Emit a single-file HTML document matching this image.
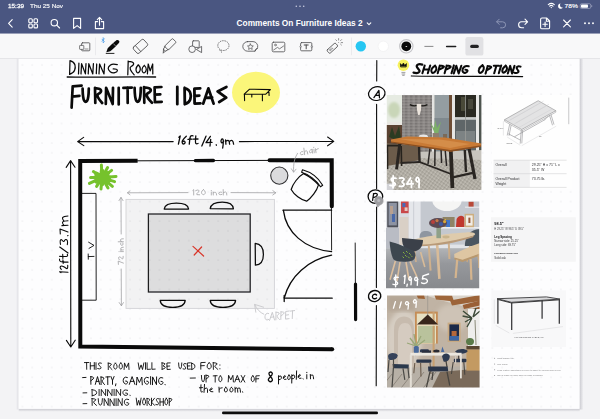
<!DOCTYPE html>
<html>
<head>
<meta charset="utf-8">
<title>Comments On Furniture Ideas 2</title>
<style>
html,body{margin:0;padding:0;background:#f3f3f5;overflow:hidden;}
body{width:600px;height:419px;font-family:"Liberation Sans",sans-serif;}
svg{display:block;position:absolute;left:0;top:0;}
text{font-family:"Liberation Sans",sans-serif;}
.hw{fill:none;stroke:#0a0a0a;stroke-linecap:round;stroke-linejoin:round;}
.ui{fill:none;stroke:#fff;stroke-width:1.1;stroke-linecap:round;stroke-linejoin:round;}
.tb{fill:none;stroke:#4a4a4c;stroke-width:0.8;stroke-linecap:round;stroke-linejoin:round;}
</style>
</head>
<body>
<svg width="600" height="419" viewBox="0 0 600 419">
<defs>
  <pattern id="dots" x="17.5" y="60" width="9.79" height="9.76" patternUnits="userSpaceOnUse">
    <circle cx="4.9" cy="4.9" r="0.58" fill="#d9d9dd"/>
  </pattern>
  <linearGradient id="shR" x1="0" x2="1" y1="0" y2="0">
    <stop offset="0" stop-color="#c9c9cf"/><stop offset="1" stop-color="#f3f3f5"/>
  </linearGradient>
  <linearGradient id="shB" x1="0" x2="0" y1="0" y2="1">
    <stop offset="0" stop-color="#c9c9cf"/><stop offset="1" stop-color="#f3f3f5"/>
  </linearGradient>
  <filter id="b1" x="-10%" y="-10%" width="120%" height="120%"><feGaussianBlur stdDeviation="0.6"/></filter>
  <filter id="b2" x="-10%" y="-10%" width="120%" height="120%"><feGaussianBlur stdDeviation="1.2"/></filter>
  <filter id="b3" x="-10%" y="-10%" width="120%" height="120%"><feGaussianBlur stdDeviation="2.2"/></filter>
  <filter id="b03" x="-10%" y="-10%" width="120%" height="120%"><feGaussianBlur stdDeviation="0.35"/></filter>
</defs>

<!-- app background -->
<rect x="0" y="0" width="600" height="419" fill="#f3f3f5"/>

<!-- page -->
<g id="page">
  <rect x="579.5" y="58.5" width="4" height="351" fill="url(#shR)"/>
  <rect x="18.7" y="408.8" width="561" height="3" fill="url(#shB)"/>
  <rect x="16.7" y="58.5" width="2" height="351" fill="#e6e6ea"/>
  <rect x="18.7" y="58.5" width="560.8" height="350.3" fill="#fdfdfe"/>
  <rect x="18.7" y="58.5" width="560.8" height="350.3" fill="url(#dots)"/>
</g>

<!-- PHOTOS -->
<g id="photos">
<defs>
<clipPath id="cA"><rect x="386.8" y="95" width="94.6" height="95"/></clipPath>
<clipPath id="cB"><rect x="386" y="201.6" width="93.2" height="86.6"/></clipPath>
<clipPath id="cC"><rect x="387" y="295.6" width="92.6" height="92"/></clipPath>
<pattern id="rugA" width="3" height="3" patternUnits="userSpaceOnUse" patternTransform="rotate(35)"><rect width="3" height="3" fill="#b1ada4"/><rect width="1.5" height="1.5" fill="#9d9990"/><rect x="1.5" y="1.5" width="1.5" height="1.5" fill="#c4c0b7"/></pattern>
<pattern id="brick" width="5" height="3" patternUnits="userSpaceOnUse"><rect width="5" height="3" fill="#8b8785"/><rect width="2.4" height="1.4" fill="#7a7674"/><rect x="2.6" y="1.6" width="2.2" height="1.2" fill="#9a9694"/></pattern>
</defs>
<g clip-path="url(#cA)"><g filter="url(#b1)">
<rect x="384" y="92" width="100" height="101" fill="#b9b6b0"/>
<rect x="385" y="93" width="17" height="31" fill="#e6ebe2"/>
<ellipse cx="394" cy="110" rx="6" ry="8" fill="#c9d6b8" filter="url(#b2)"/>
<rect x="385" y="122" width="17" height="3" fill="#e9e7e2"/>
<rect x="385" y="125" width="18" height="38" fill="#5a4330"/>
<path d="M389,137 L392,127 L395,136 L399,126 L401,138 L396,140 Z" fill="#2c3b22"/>
<rect x="402" y="93" width="30.4" height="60" fill="url(#brick)"/>
<rect x="432" y="93" width="2.6" height="60" fill="#e4e4e2"/>
<rect x="434.6" y="93" width="14.6" height="62" fill="#949da1"/>
<rect x="434.6" y="118" width="14.6" height="36" fill="#7f898e"/>
<rect x="449" y="93" width="3.2" height="60" fill="#6d4e34"/>
<rect x="452" y="93" width="3.2" height="64" fill="#e6e6e4"/>
<rect x="455" y="93" width="21" height="24.4" fill="#2b2a22"/>
<rect x="461" y="97" width="4" height="14" fill="#4a4838"/><rect x="468" y="99" width="5" height="10" fill="#47463a"/>
<rect x="455" y="117.2" width="21" height="2.6" fill="#c9cccb"/>
<rect x="455" y="119.8" width="21" height="36" fill="#5e6668"/>
<rect x="456" y="131" width="19" height="12" fill="#7d8384"/>
<rect x="465.2" y="93" width="0.8" height="60" fill="#9a9c98"/>
<rect x="476" y="93" width="3" height="70" fill="#e9e9e7"/>
<rect x="479" y="93" width="3" height="70" fill="#4e5250"/>
<path d="M384,153 L484,150 L484,193 L384,193 Z" fill="#c7c4be"/>
<path d="M384,165 L420,158 L484,160 L484,193 L384,193 Z" fill="url(#rugA)"/>
<path d="M384,184 L396,183 L392,193 L384,193 Z" fill="#d2d2d6"/>
<path d="M387,143 L420,146 L420,160 L387,166 Z" fill="#6c5c4c"/>
<path d="M409.8,104.6 C413,106.4 415,106 417,105.4 M427.4,104.6 C424,106.4 422,106 420.6,105.4" stroke="#1c1a18" stroke-width="1.3" fill="none"/>
<path d="M416.6,104 L421.4,104 L421,110 L419.6,115 L418.2,115 L417,110 Z" fill="#ebe4dc"/>
<path d="M435,134 L430,122 L434,128 L435.4,120 L437,128 L441,121.6 L438,134 Z" fill="#7cb167"/>
<rect x="432.6" y="133" width="6.4" height="6.6" fill="#8c7f72"/>
<ellipse cx="423.4" cy="136.8" rx="4.6" ry="2.2" fill="#e6e6e6"/>
<rect x="443" y="134" width="4" height="4" fill="#7a6a58"/>
<path d="M430,148 L428,164 M435,148 L434.8,166 M441,148 L441.6,163 M445,148 L446.6,166" stroke="#2a2725" stroke-width="1.5" fill="none"/>
<path d="M387.4,145 L387.6,169 M387,145.6 L401,145.6 M401.2,146 L401.6,166" stroke="#25231f" stroke-width="1.6" fill="none"/>
<path d="M400,142 L396.6,169.4" stroke="#2a2624" stroke-width="3" fill="none"/>
<path d="M419,145 L419.6,163" stroke="#2a2624" stroke-width="2.4" fill="none"/>
<path d="M400.6,163 L419.4,162 L451,174" stroke="#2a2624" stroke-width="1.8" fill="none"/>
<path d="M450.8,150 L452.4,188" stroke="#2a2624" stroke-width="3.8" fill="none"/>
<path d="M469,148 L475,179" stroke="#2a2624" stroke-width="3.2" fill="none"/>
<path d="M464.8,150 L466,172" stroke="#2a2624" stroke-width="2.4" fill="none"/>
<path d="M452.6,177.4 L474,172.6" stroke="#2a2624" stroke-width="2.2" fill="none"/>
<path d="M391,139.4 L407,136.6 L445,137.4 L481.4,143.6 L481.4,146.6 L450.6,151.6 L391,142.2 Z" fill="#c87a36"/>
<path d="M400,139 L440,139.4 L470,144 L450,148 Z" fill="#d48d4a"/>
<path d="M391,141.4 L450.6,150 L481.4,145.2 L481.4,146.8 L450.6,151.8 L391,142.6 Z" fill="#8a4f22"/>
</g>
<path d="M396.0,178.4 Q393.0,177.5 391.8,178.4 Q390.6,179.4 391.8,180.6 Q393.0,181.8 394.5,183.0 Q396.0,184.1 394.8,185.2 Q393.6,186.2 390.0,185.3  M393.2,176.0 L393.0,187.8 M399.6,178.2 Q402.8,177.4 403.6,178.4 Q404.5,179.3 402.9,180.7 Q401.4,182.0 403.0,183.1 Q404.6,184.1 403.7,185.6 Q402.8,187.0 399.4,186.2  M410.6,178.0 L406.8,184.1 L413.2,183.8 M411.4,180.8 L411.5,187.4 M419.4,179.9 Q417.6,182.7 416.5,181.3 Q415.5,179.9 416.4,178.2 Q417.3,176.6 418.4,178.0 Q419.4,179.3 419.0,187.6 " fill="none" stroke="#ffffff" stroke-width="1.8" stroke-linecap="round" stroke-linejoin="round" />
</g>
<g clip-path="url(#cB)"><g filter="url(#b1)">
<rect x="383" y="198" width="100" height="93" fill="#c4c8cf"/>
<linearGradient id="flB" x1="0" x2="0" y1="0" y2="1"><stop offset="0" stop-color="#b2b4b7"/><stop offset="0.35" stop-color="#96989c"/><stop offset="1" stop-color="#85878b"/></linearGradient>
<rect x="383" y="248" width="100" height="44" fill="url(#flB)"/>
<rect x="383" y="244.6" width="100" height="3.6" fill="#e2e4e8"/>
<rect x="383" y="198" width="26" height="50" fill="#d9dbe0"/>
<rect x="387.2" y="201" width="11" height="26.4" fill="#4d4f58"/>
<rect x="388.6" y="203" width="8.2" height="22.4" fill="#8d93a2"/>
<rect x="390" y="206" width="3" height="8" fill="#b8a090"/><rect x="392" y="214" width="3" height="8" fill="#4a68a8"/>
<rect x="401" y="201" width="7.6" height="12.2" fill="#c9474a"/>
<rect x="402.4" y="203" width="3" height="4" fill="#4a6ab8"/><rect x="404.6" y="207.4" width="3" height="3.6" fill="#e4c8c0"/>
<rect x="399.4" y="217" width="9" height="28" fill="#d9d0c6"/>
<rect x="383" y="228" width="16" height="20" fill="#b9bcc4"/>
<rect x="409" y="198" width="11.6" height="48" fill="#e5e7eb"/>
<rect x="413" y="198" width="1.2" height="48" fill="#cfd2d8"/>
<ellipse cx="447" cy="200.4" rx="14.6" ry="10.6" fill="#f5f5f4"/>
<rect x="441" y="227" width="40" height="1.6" fill="#eceef0"/>
<rect x="442.6" y="217" width="12" height="10" fill="#8f8466"/>
<rect x="446" y="220" width="4" height="7" fill="#3f74c8"/><rect x="443" y="219" width="3" height="4" fill="#d8b040"/>
<path d="M456,227 L456.6,219 C459,214.6 463,215 464.4,218 L464.4,227 Z" fill="#c0382e"/>
<rect x="464.6" y="213.8" width="9.4" height="13.4" fill="#cdae80"/>
<rect x="466" y="215.4" width="6.6" height="10.2" fill="#f1ede6"/>
<rect x="468.4" y="217.6" width="2" height="5.4" fill="#9a5a3a"/>
<rect x="465" y="206.6" width="15" height="1.2" fill="#e8e8ea"/><rect x="468.6" y="201.6" width="5" height="5" fill="#b84838"/>
<path d="M419.6,238 C419,232 423,230.6 427,231 C431,231.4 433,234 432.6,238 Z" fill="#8f96a0"/>
<path d="M464.8,246 C465,236 470,229.6 479.6,229 L479.6,246 Z" fill="#4b5661"/>
<path d="M470,246 L467,262 M476,246 L479,262" stroke="#c9a882" stroke-width="1.4" fill="none"/>
<path d="M437.2,245 L439.4,278.8" stroke="#d8bb98" stroke-width="2.6" fill="none"/>
<path d="M428.8,246 L430.6,270.6" stroke="#cfb08c" stroke-width="2" fill="none"/>
<path d="M448.8,243 L449.4,259" stroke="#cfb08c" stroke-width="2" fill="none"/>
<path d="M414,246 L416,262" stroke="#cfb08c" stroke-width="1.6" fill="none"/>
<path d="M408,241.4 C418,237 440,234 466,232.4 C474,232 477,233.6 474,235.4 C462,240 440,244.6 424,245.6 C414,246 407,244 408,241.4 Z" fill="#dfcbac"/>
<path d="M409,243.6 C416,246 440,244.6 474,235.4 L473,237.2 C450,245 420,248 409,245 Z" fill="#b99a78"/>
<rect x="436.4" y="226.6" width="4.6" height="11.6" fill="#8fa088"/>
<ellipse cx="438" cy="223" rx="9" ry="5" fill="#5b4a52"/>
<circle cx="433" cy="222" r="2" fill="#b8403a"/><circle cx="441" cy="224" r="2" fill="#3a5aa8"/><circle cx="437" cy="220.6" r="1.6" fill="#c8784a"/><circle cx="444.6" cy="221.6" r="1.6" fill="#d8a838"/>
<ellipse cx="446" cy="237" rx="3.6" ry="1.4" fill="#c9b48c"/>
<path d="M402,238 L423,240 C423,247 419,251.6 412,251.6 C406,251.6 402,247 402,238 Z" fill="#3b4149"/>
<path d="M420.6,252 L424.8,267" stroke="#d8bb98" stroke-width="1.6" fill="none"/>
<path d="M389.6,241.6 C396,243 406,247 413,250.6 C416.6,253 416,258 412.6,260.6 C406,262.6 397,262 393.6,259.6 C391,255 390,248 389.6,241.6 Z" fill="#3d4650"/>
<path d="M403,252 l1.6,1.6 M406,251 l1.6,1.6 M409,253 l1.6,1.6 M405,255 l1.6,1.6 M408,256.6 l1.6,1.6 M411,255.6 l1.2,1.2 M402.6,256.6 l1.4,1.4" stroke="#8fc03a" stroke-width="0.9" fill="none"/>
<path d="M395.4,261 L390,279.8 M400,262 L397,281 M410,261.6 L417,277 M406,262 L409,280" stroke="#dcbf9e" stroke-width="1.6" fill="none"/>
<path d="M454.2,254 C462,250 472,245.6 480,243 L480,254 L462.6,260.4 L454.4,258 Z" fill="#dec6a2"/>
<path d="M454.4,257.4 L462.6,259.8 L480,253.4 L480,255.6 L462.6,262 L454.4,259.4 Z" fill="#b8986e"/>
<path d="M457.2,259.6 L455.6,278" stroke="#d4b48e" stroke-width="2.2" fill="none"/>
<path d="M470.6,259 L471.4,279.8" stroke="#d4b48e" stroke-width="2.2" fill="none"/>
<path d="M478.6,254 L479,268" stroke="#c9aa84" stroke-width="1.6" fill="none"/>
</g>
<path d="M398.2,277.4 Q395.6,276.5 394.6,277.4 Q393.5,278.4 394.6,279.6 Q395.6,280.8 396.9,282.0 Q398.2,283.1 397.2,284.2 Q396.1,285.2 393.0,284.3  M395.8,275.0 L395.6,286.8 M404.1,276.4 L405.2,275.2 L404.4,283.4 M407.3,284.2 L406.9,286.2 M411.6,278.8 Q410.0,280.9 409.3,279.9 Q408.5,278.8 409.3,277.5 Q410.1,276.2 410.8,277.3 Q411.6,278.4 411.0,284.8  M417.9,279.2 Q416.1,281.3 415.1,280.3 Q414.2,279.2 415.1,277.9 Q416.0,276.6 417.0,277.7 Q417.9,278.8 417.3,285.2 " fill="none" stroke="#ffffff" stroke-width="1.4" stroke-linecap="round" stroke-linejoin="round" />
<path d="M428.6,274 L423,275.8 L422.4,279 C425,278 428,279.4 427.4,281.6 C426.6,283.6 423.6,284 421.6,282.8" fill="none" stroke="#ffffff" stroke-width="1.4" stroke-linecap="round" stroke-linejoin="round" />
</g>
<g clip-path="url(#cC)"><g filter="url(#b1)">
<rect x="384" y="292" width="100" height="100" fill="#c0b3a4"/>
<ellipse cx="404" cy="340" rx="18" ry="30" fill="#d6cdc2" filter="url(#b3)"/>
<ellipse cx="452" cy="318" rx="16" ry="14" fill="#cec3b6" filter="url(#b3)"/>
<rect x="387" y="295" width="28" height="16" fill="#b3a595" filter="url(#b3)"/>
<path d="M415,292 L484,292 L484,312 L462,306 L440,300 Z" fill="#d9d3cb"/>
<path d="M416.6,295 L424,295 L425,299 L418,298.6 Z" fill="#9c6438"/>
<path d="M434.4,295 L452,295.4 L454,301.4 L436,299.4 Z" fill="#9e663a"/>
<path d="M450,300.6 L480,295 L480,301 L452,305.6 Z" fill="#9c6438"/>
<path d="M462.6,305 L480,300.6 L480,305.6 L464,309 Z" fill="#9a5e34"/>
<path d="M472,309 L480,306.6 L480,310 L473,311.6 Z" fill="#9a5e34"/>
<path d="M394,370 L394,330 C394,320 399,316.6 404,316.6 C409,316.6 414,320 414,330 L414,370 Z" fill="#c7bbae"/>
<path d="M398,370 L398,334 C398,326 401,323 405,323 C409,323 412,326 412,334 L412,370 Z" fill="#d5cbc0"/>
<rect x="415" y="311.6" width="22.8" height="32" fill="#c58d56"/>
<rect x="416.8" y="313.6" width="19.2" height="30" fill="#e6dfc2"/>
<rect x="418" y="326" width="17" height="17" fill="#b9c29c"/>
<rect x="432.6" y="312" width="2" height="56" fill="#c9a070"/>
<path d="M427.7,295 L427.7,315" stroke="#9a948c" stroke-width="0.7" fill="none"/>
<path d="M427.7,314.6 L438.4,324.8 L416.8,324.8 Z" fill="#37271f"/>
<rect x="417" y="324.6" width="21.4" height="1.2" fill="#e8d8b8"/>
<rect x="447.6" y="322.6" width="13" height="19.4" fill="#c9aa82"/>
<rect x="449.4" y="324.4" width="9.6" height="16" fill="#1f2b49"/>
<rect x="451.6" y="331" width="5" height="5" fill="#b4683a"/><rect x="449.4" y="336" width="9.6" height="4.4" fill="#3a66a6"/>
<rect x="468" y="309" width="13" height="40" fill="#eeeeec"/>
<path d="M472,318 L463,311 M472,318 L465,322 M472,318 L467,327 M473,317 L476,308 M473,317 L480,311 M472,318 L462.6,316" stroke="#3c4a38" stroke-width="1.4" fill="none"/>
<path d="M475,320 L476,345" stroke="#8a8a78" stroke-width="1" fill="none"/>
<path d="M384,368 L484,366 L484,392 L384,392 Z" fill="#b7b0a6"/>
<path d="M440,372 L484,368 L484,392 L430,392 Z" fill="#7a6a5a"/>
<path d="M388,392 L402,374 M398,392 L412,374 M408,392 L424,372 M420,392 L436,372 M384,384 L392,374" stroke="#8f887e" stroke-width="1" fill="none"/>
<rect x="466.4" y="346" width="15" height="3.6" fill="#5a4630"/>
<rect x="466.4" y="349.6" width="15" height="21" fill="#c39a62"/>
<ellipse cx="470" cy="341.6" rx="4" ry="3.6" fill="#5a7a48"/>
<path d="M416,346 L410,338 M416,346 L414,334 M416,346 L421,336 M416,346 L407,343 M417,346 L425,340" stroke="#9aa878" stroke-width="1.3" fill="none"/>
<rect x="413.8" y="346" width="5" height="7.4" rx="1.6" fill="#49699a"/>
<rect x="420" y="349.2" width="9" height="3.4" rx="1.4" fill="#2f3b51"/>
<rect x="416.2" y="359.6" width="15.2" height="3.2" rx="1" fill="#2a3448"/>
<path d="M414.8,363 L413.8,373.2 M420.6,363 L421,376.4 M430,363 L431,374" stroke="#6a5a4a" stroke-width="1.1" fill="none"/>
<path d="M455,351.6 C458,348.4 465,348.4 467.8,351 C466,354.6 458,354.6 455,351.6 Z" fill="#2f3b51"/>
<rect x="453.8" y="358.8" width="12.6" height="3.4" rx="1" fill="#2a3448"/>
<path d="M453.2,362 L451.4,374 M463.8,362 L464.8,374.8 M458.6,354 L458.6,359" stroke="#4a4642" stroke-width="1.1" fill="none"/>
<ellipse cx="436.4" cy="351" rx="3.2" ry="1.6" fill="#2a2a30"/><path d="M441,352 L442.4,346.6 L444.4,352 Z" fill="#4a6aa0"/>
<rect x="422" y="350.4" width="9" height="2.6" fill="#2a2f3c"/>
<rect x="410.4" y="352.8" width="51.2" height="2.8" fill="#ebe7df"/>
<rect x="409.8" y="355" width="2" height="32.4" fill="#e4dfd6"/>
<rect x="460" y="355" width="1.8" height="23.4" fill="#e4dfd6"/>
<rect x="415" y="355.6" width="1.2" height="6" fill="#cfc9c0"/><rect x="455" y="355.6" width="1.2" height="8" fill="#cfc9c0"/>
<path d="M388,356 C389,352 396,352.4 397.8,355.4 C397,359.6 392,361 388.6,359.4 Z" fill="#34425a"/>
<path d="M392.6,364 L408.8,364.6 L408.6,368.4 L393,368.2 Z" fill="#2c374c"/>
<path d="M393.4,359 L393.6,368 M393.4,368 L392,387.6 M389,360 L388,372 M403,368.4 L404.8,379.8 M408,368 L409,378" stroke="#4a4844" stroke-width="1.2" fill="none"/>
<path d="M442,356.6 C443,352.6 449,352.6 449.8,356 C449.6,361 446,362.4 443.6,361.6 Z" fill="#2f3b51"/>
<path d="M428,366.4 L447.6,366.6 L448.2,371.2 L428.4,371.4 Z" fill="#2a3448"/>
<path d="M430,371.6 L426.4,387.6 M447,371.6 L449.8,385.6 M446,361 L447,367 M433,372 L432,380" stroke="#47443f" stroke-width="1.3" fill="none"/>
</g>
<path d="M395.4,301.6 L393.4,308.2 M401.2,302 L399.6,307.8" fill="none" stroke="#ffffff" stroke-width="1.3" stroke-linecap="round" stroke-linejoin="round" />
<path d="M408.9,303.4 Q406.9,305.4 405.9,304.4 Q404.9,303.4 405.9,302.2 Q406.9,301.0 407.9,302.0 Q408.9,303.0 408.0,309.0  M416.7,301.7 Q414.8,303.7 413.9,302.7 Q412.9,301.7 413.9,300.4 Q414.9,299.2 415.8,300.2 Q416.7,301.2 415.9,307.4 " fill="none" stroke="#ffffff" stroke-width="1.3" stroke-linecap="round" stroke-linejoin="round" />
</g>
<g id="specA" filter="url(#b03)">
<rect x="492" y="95" width="80" height="94" fill="#fefefe"/>
<path d="M504.5,119.7 L538.2,100.7 L555.8,110.7 L521.7,129.5 Z" fill="#e3e3e4" stroke="#8e8e90" stroke-width="0.6" stroke-linejoin="round"/>
<path d="M504.5,119.7 L504.5,121.2 L521.7,131 L555.8,112.2 L555.8,110.7 M521.7,129.5 L521.7,131" fill="none" stroke="#8e8e90" stroke-width="0.5"/>
<path d="M510,116.6 L543.6,97.6 M515.6,119.6 L549,100.8 M507.4,118.2 L541,99.2 M513,121.4 L546.4,102.4 M518.4,124.4 L552,105.6" transform="translate(0,3.4)" stroke="#c9c9cb" stroke-width="0.35" fill="none"/>
<path d="M509.7,124.2 L507.2,135.5 M511.2,125 L509,135.8 M521.2,131 L520.2,143.7 M522.6,130.6 L521.8,143.4 M508.2,133.7 L520.2,140 M549.5,115.2 L552.5,125.3 M551,114.6 L554,124.6 M548.7,116 L544.6,119.6 M514.4,136.8 L545.4,119.4" stroke="#858588" stroke-width="0.55" fill="none"/>
<path d="M503.4,121.2 L503.4,135.5 M507.2,137 L520.2,145.2 M521.7,145.7 L556.2,126.2" stroke="#cdcdd0" stroke-width="0.4" fill="none"/>
<text transform="translate(497.4,129.2) scale(0.0950)" font-size="20" fill="#555" font-family="Liberation Sans, sans-serif">29 1/4"</text><text transform="translate(506.6,143.6) scale(0.0950)" font-size="20" fill="#555" font-family="Liberation Sans, sans-serif">35 1/2"</text><text transform="translate(539,137) scale(0.0950)" font-size="20" fill="#555" font-family="Liberation Sans, sans-serif">71"</text>
<rect x="568.4" y="97.6" width="0.8" height="26.6" fill="#b9b9bc"/>
<rect x="493.6" y="160.2" width="36.2" height="27.2" fill="#f1f1f2"/>
<path d="M493.6,160.2 H566.6 M493.6,173.7 H566.6 M493.6,187.4 H566.6" stroke="#cfcfd2" stroke-width="0.55" fill="none"/>
<text transform="translate(495.40,166.00) scale(0.1750)" font-size="20" fill="#2e2e30" font-family="Liberation Sans, sans-serif">Overall</text>
<text transform="translate(531.80,166.00) scale(0.1750)" font-size="20" fill="#2e2e30" font-family="Liberation Sans, sans-serif">29.25'' H x 71'' L x</text>
<text transform="translate(531.80,171.10) scale(0.1750)" font-size="20" fill="#2e2e30" font-family="Liberation Sans, sans-serif">35.5'' W</text>
<text transform="translate(495.40,179.90) scale(0.1750)" font-size="20" fill="#2e2e30" font-family="Liberation Sans, sans-serif">Overall Product</text>
<text transform="translate(495.40,184.80) scale(0.1750)" font-size="20" fill="#2e2e30" font-family="Liberation Sans, sans-serif">Weight</text>
<text transform="translate(531.80,179.90) scale(0.1750)" font-size="20" fill="#2e2e30" font-family="Liberation Sans, sans-serif">73.75 lb.</text>
</g>
<g id="specB" filter="url(#b03)">
<rect x="491" y="217.3" width="84.8" height="44.4" fill="#f5f5f6"/>
<text transform="translate(494.30,224.80) scale(0.1950)" font-size="20" fill="#141416" font-weight="bold" font-family="Liberation Sans, sans-serif">98.5"</text>
<text transform="translate(494.30,229.50) scale(0.1325)" font-size="20" fill="#48484a" font-family="Liberation Sans, sans-serif">H 29.25" W 98.5" D 39.5"</text>
<text transform="translate(494.30,237.95) scale(0.1475)" font-size="20" fill="#141416" font-weight="bold" font-family="Liberation Sans, sans-serif">Leg Spacing</text>
<text transform="translate(494.30,242.00) scale(0.1400)" font-size="20" fill="#3a3a3c" font-family="Liberation Sans, sans-serif">Narrow side: 25.25"</text>
<text transform="translate(494.30,246.20) scale(0.1400)" font-size="20" fill="#3a3a3c" font-family="Liberation Sans, sans-serif">Long side: 69.75"</text>
<text transform="translate(494.30,253.90) scale(0.1250)" font-size="20" fill="#141416" font-weight="bold" font-family="Liberation Sans, sans-serif">PRODUCT DETAILS</text>
<text transform="translate(494.30,259.40) scale(0.1425)" font-size="20" fill="#3a3a3c" font-family="Liberation Sans, sans-serif">Solid oak</text>
</g>
<g id="specC" filter="url(#b03)">
<rect x="491.5" y="290.5" width="74.6" height="56.4" fill="#f8f8f9"/>
<path d="M497.1,298.7 L546.4,296.9 L560,299.1 L511.4,302.3 Z" fill="#d9d9db" stroke="#39393b" stroke-width="0.9" stroke-linejoin="round"/>
<path d="M497.1,299.3 L511.4,303 L560,299.8" fill="none" stroke="#2c2c2e" stroke-width="0.9"/>
<path d="M497.9,299.4 L497.9,323.7 M511.7,302.6 L511.7,330.1 M542.1,300.3 L542.1,318.7 M559.3,299.8 L559.3,323.7" stroke="#343436" stroke-width="1.25" fill="none"/>
<path d="M494.3,299.4 L494.3,323.7 M495.7,325.4 L509.3,333 M512.9,333.4 L562.9,326.6" stroke="#cdcdd0" stroke-width="0.4" fill="none"/>
<text transform="translate(529.20,338.10) scale(0.1175)" font-size="20" fill="#5a5a5c" text-anchor="middle" font-family="Liberation Sans, sans-serif">FRAME DINING TABLE, 60"</text>
</g>
<g id="specC2" filter="url(#b03)">
<circle cx="494.6" cy="358.3" r="0.5" fill="#8a8a8c"/><text transform="translate(497.2,359.1) scale(0.1145)" font-size="20" fill="#7c7c7e" font-family="Liberation Sans, sans-serif">Solid marble top.</text>
<circle cx="494.6" cy="364.0" r="0.5" fill="#8a8a8c"/><text transform="translate(497.2,364.8) scale(0.1145)" font-size="20" fill="#7c7c7e" font-family="Liberation Sans, sans-serif">Iron frame.</text>
<circle cx="494.6" cy="369.7" r="0.5" fill="#8a8a8c"/><text transform="translate(497.2,370.5) scale(0.1145)" font-size="20" fill="#7c7c7e" font-family="Liberation Sans, sans-serif">Legs feature adjustable levelers to adapt to varying floor levels.</text>
<circle cx="494.6" cy="375.4" r="0.5" fill="#8a8a8c"/><text transform="translate(497.2,376.2) scale(0.1145)" font-size="20" fill="#7c7c7e" font-family="Liberation Sans, sans-serif">Top is made in India; base is made in Taiwan.</text>
</g>
</g><!--/photos-->

<!-- HANDWRITING -->
<g id="hand">
<g id="room">
  <!-- carpet -->
  <rect x="126" y="199.4" width="148.4" height="109" fill="#000" fill-opacity="0.042" stroke="#d3d3d6" stroke-width="0.9"/>
  <!-- table -->
  <rect x="148.4" y="214" width="101.8" height="78" fill="#000" fill-opacity="0.088" stroke="#1e1e20" stroke-width="1.25"/>
  <!-- walls -->
  <path d="M80.2,161 L137.6,160.8" class="hw" stroke-width="4" style="stroke-linecap:butt"/>
  <path d="M137.6,160.8 L268,160.4" class="hw" stroke-width="1"/>
  <path d="M195.4,160.6 L213.4,160.5" class="hw" stroke-width="3.4"/>
  <path d="M269.6,160.3 L331.7,160.4 L331.8,206.2" class="hw" stroke-width="4.1" style="stroke-linejoin:miter"/>
  <path d="M80.2,159 L80.3,346.6 L332.2,349.2" class="hw" stroke-width="4" style="stroke-linejoin:miter;stroke-linecap:butt"/>
  <circle cx="332.2" cy="349.2" r="2" fill="#0a0a0a"/>
  <path d="M331.4,206 L331.6,250" class="hw" stroke-width="0.9"/>
  <path d="M355.2,243 L355.4,283" class="hw" stroke-width="0.9"/>
  <path d="M355.5,284 L355.6,319.6" class="hw" stroke-width="3.2"/>
  <!-- doors -->
  <path d="M283,210.2 L331.6,210.2" class="hw" stroke-width="1.3"/>
  <path d="M283.4,210.4 C286,232 304,249 331.6,251.6" class="hw" stroke-width="1.3"/>
  <path d="M331.6,255.2 C308,260 290,276 284.2,298" class="hw" stroke-width="1.3"/>
  <path d="M284.2,298 L332.2,298.2 M284.2,295.4 L284.2,301.6" class="hw" stroke-width="1.3"/>
  <!-- tv unit -->
  <path d="M81.4,193.4 L96,193.4 L96.2,300.2 L81.4,300.2" class="hw" stroke-width="0.9"/>
  <path d="M88.2,254 L88.3,259.2 M88.3,256.6 L94,256.4" class="hw" stroke-width="0.9"/>
  <path d="M88.6,242.2 L94,245.4 L89,248.4" class="hw" stroke-width="0.9"/>
  <!-- chairs -->
  <path d="M164.2,209 C165,203.6 171,203.2 176.4,203.2 C182,203.2 188,204 188.6,209 Z" fill="#fdfdfe" class="hw" stroke-width="1.25"/>
  <path d="M210.2,208.6 C211,202.6 217,202 222.2,202 C228,202 233,203.2 233.4,208.8 Z" fill="#fdfdfe" class="hw" stroke-width="1.25"/>
  <path d="M160.2,300.4 C160.6,306.6 167,307.4 172.8,307.4 C179,307.4 184.8,306.4 185.2,300.4 Z" fill="#fdfdfe" class="hw" stroke-width="1.25"/>
  <path d="M210.2,300.4 C210.6,306.6 217,307.4 223,307.4 C229,307.4 235.2,306.4 235.6,300.4 Z" fill="#fdfdfe" class="hw" stroke-width="1.25"/>
  <path d="M255.2,243.4 C262,244 263.4,249 263.4,254.4 C263.4,260 262,264.6 255.4,265.2 Z" fill="#fdfdfe" class="hw" stroke-width="1.25"/>
  <!-- red x -->
  <path d="M193,246.4 L203.6,256 M201.6,247 L194.2,255" class="hw" style="stroke:#d9362a" stroke-width="1.2"/>
  <!-- plant -->
  <g class="hw" style="stroke:#76c22c" stroke-width="3">
    <path d="M102,177.6 L101.4,165 M102,177.6 L111.6,170.4 M102,177.6 L116,176.4 M102,177.6 L112.4,186.4 M102,177.6 L101,189 M102,177.6 L89.4,183.4 M102,177.6 L93.4,171.6 M102,177.6 L107.6,167.6 M102,177.6 L96.6,186.4 M102,177.6 L108,188 M102,177.6 L114.6,181.6 M102,177.6 L90.6,177.6"/>
    <path d="M96.6,174 L108,181 M107.6,173.4 L96.6,181.4 M102,171 V184 M95.6,177.6 H109" stroke-width="4.6"/>
  </g>
  <!-- side table circle -->
  <circle cx="279.3" cy="175.6" r="8.6" fill="#dbdbdd" stroke="#333335" stroke-width="1.1"/>
  <!-- armchair -->
  <g transform="translate(305,187.4) rotate(37)">
    <path d="M-9.4,-10.2 C-3,-11.4 3,-11.4 9.2,-10.2 C11.6,-4 11.4,4.6 9.6,10 C4,12.4 -4.4,12.4 -9.8,10 C-11.8,4.6 -12,-4 -9.4,-10.2 Z" fill="#fdfdfe" class="hw" stroke-width="1.2"/>
    <path d="M-12.6,-12.6 C-5,-15.6 5,-15.6 12.8,-12.4 L12,-9.8 C5,-12.6 -5,-12.6 -11.8,-10 Z" fill="#fdfdfe" class="hw" stroke-width="1.1"/>
  </g>
</g>
</g>
<g id="txt"><!--TXT-->
<ellipse cx="256" cy="92.4" rx="24" ry="20.6" fill="#fbf67a"/>
<path d="M244.2,94.2 L249.6,89.2 L270.4,89.6 L265.8,94.2 Z M244.4,94.2 L244.6,100.6 M262.4,94.2 L262.4,100.8 M268.9,90.8 L269.1,95.4 M251.8,94.4 L251.8,97" fill="none" stroke="#0a0a0a" stroke-width="1.1" stroke-linecap="round" stroke-linejoin="round" />
<path d="M70.0,60.6 L69.6,74.4 M70.0,60.6 Q74.0,62.0 74.9,64.7 Q75.7,67.5 74.6,70.3 Q73.6,73.0 69.6,74.4  M78.9,63.2 L78.5,73.9 M81.0,73.9 L81.6,63.7 L85.4,73.9 L86.0,63.7 M88.2,73.9 L88.8,63.7 L92.8,73.9 L93.4,63.7 M96.7,64.0 L96.3,73.6 M99.0,73.9 L99.6,64.0 L104.0,73.9 L104.6,64.0 M117.3,64.6 Q112.6,63.4 110.5,64.9 Q108.3,66.4 108.2,68.3 Q108.2,70.3 110.2,71.8 Q112.2,73.3 114.8,72.7 Q117.3,72.1 117.4,70.5 Q117.4,68.8 113.2,68.9  M128.2,61.0 L127.8,74.8 M128.1,61.3 Q133.2,61.7 133.6,63.3 Q134.0,64.9 131.1,66.5 Q128.1,68.2 134.2,74.8  M138.3,64.8 Q136.2,67.0 136.0,69.1 Q135.9,71.2 136.9,72.3 Q137.9,73.4 139.0,72.3 Q140.1,71.2 140.3,69.1 Q140.4,67.0 138.3,64.8  M144.3,65.4 Q142.2,67.4 142.0,69.4 Q141.9,71.4 142.9,72.4 Q143.9,73.4 145.0,72.4 Q146.1,71.4 146.3,69.4 Q146.4,67.4 144.3,65.4  M147.4,73.9 L148.2,64.0 L150.2,70.9 L152.7,64.0 L152.8,73.9" fill="none" stroke="#0a0a0a" stroke-width="1.25" stroke-linecap="round" stroke-linejoin="round" />
<path d="M67.2,77 C90,77.6 125,76.6 155.6,77" fill="none" stroke="#0a0a0a" stroke-width="1.3" stroke-linecap="round" stroke-linejoin="round" />
<path d="M81.6,85.6 L72.7,86.3 L71.6,107.6 M72.1,96.6 L79.4,95.9 M82.6,88.6 Q82.8,98.7 84.3,100.8 Q85.7,103.0 87.1,100.8 Q88.6,98.7 88.8,88.6  M95.0,87.8 L95.3,103.0 M95.0,88.1 Q100.5,88.6 101.0,90.3 Q101.5,92.1 98.4,93.9 Q95.3,95.7 102.2,103.0  M105.8,104.0 L106.1,87.8 L112.7,104.0 L113.0,87.8 M118.7,87.8 L118.7,104.4 M123.4,87.9 L131.8,87.6 M127.6,87.6 L127.7,103.0 M134.6,87.8 Q134.8,98.4 136.3,100.7 Q137.7,103.0 139.1,100.7 Q140.6,98.4 140.8,87.8  M144.0,87.0 L144.3,102.8 M144.0,87.3 Q150.1,87.8 150.7,89.6 Q151.3,91.4 147.8,93.3 Q144.3,95.2 152.0,102.8  M161.4,87.0 L154.6,87.3 L154.9,102.2 L161.7,101.9 M154.6,94.6 L160.3,94.3" fill="none" stroke="#0a0a0a" stroke-width="2.7" stroke-linecap="round" stroke-linejoin="round" />
<path d="M177.3,86.8 L177.3,104.2 M184.6,88.0 L184.8,104.2 M184.6,88.0 Q189.3,89.6 190.3,92.9 Q191.4,96.1 190.3,99.3 Q189.3,102.6 184.8,104.2  M200.2,88.4 L194.4,88.7 L194.6,103.6 L200.4,103.3 M194.4,96.0 L199.3,95.7 M203.2,103.6 L208.4,88.4 L213.6,103.6 M205.4,97.8 L212.1,97.5" fill="none" stroke="#0a0a0a" stroke-width="2.8" stroke-linecap="round" stroke-linejoin="round" />
<path d="M226.4,87 L217.6,91.4 L226.2,97.6 L219.2,102" fill="none" stroke="#0a0a0a" stroke-width="2.8" stroke-linecap="round" stroke-linejoin="round" />
<path d="M178.9,137.2 L180.2,136.0 L178.4,144.2 M186.3,136.2 Q183.1,139.1 182.4,140.7 Q181.8,142.3 182.5,143.4 Q183.2,144.4 184.4,143.6 Q185.6,142.8 185.0,141.7 Q184.5,140.7 182.1,141.9  M193.0,135.8 Q190.9,135.4 190.3,136.7 Q189.8,138.0 189.3,144.2  M188.0,139.4 L192.1,139.1 M195.8,136.0 Q195.1,142.9 195.9,143.6 Q196.6,144.2 198.0,143.5  M193.4,139.2 L198.0,139.0 M206.0,136.2 L201.8,146.0 M210.4,136.4 L206.0,142.6 L212.0,142.4 M210.7,139.3 L210.0,146.0 M216.2,144.8 L216.4,145.2 M223.7,141.1 Q222.0,143.6 221.3,142.4 Q220.5,141.1 221.4,139.7 Q222.3,138.2 223.0,139.4 Q223.8,140.6 222.7,148.0  M225.6,140.0 L225.9,144.2 M225.9,141.3 Q227.9,140.0 228.7,140.7 Q229.5,141.3 229.6,144.2  M229.6,141.3 Q231.5,140.0 232.4,140.7 Q233.3,141.3 233.6,144.2 " fill="none" stroke="#0a0a0a" stroke-width="1.3" stroke-linecap="round" stroke-linejoin="round" />
<path d="M77.8,141.6 L173.2,141.6 M239.4,141.6 L333.6,141.4 M83.6,137.4 L77.6,141.6 L83.8,145.6 M327.6,137 L333.8,141.4 L327.6,145.8" fill="none" stroke="#0a0a0a" stroke-width="1.1" stroke-linecap="round" stroke-linejoin="round" />
<path d="M1.0,-7.5 L1.9,-8.8 L1.4,-0.4 M4.2,-7.1 Q6.2,-8.8 7.1,-8.0 Q8.0,-7.1 7.3,-5.7 Q6.6,-4.2 5.3,-2.3 Q4.0,-0.4 8.4,-0.7  M14.6,-8.8 Q12.7,-9.2 12.2,-7.9 Q11.8,-6.6 11.5,-0.4  M10.2,-5.2 L13.9,-5.5 M17.2,-8.8 Q16.8,-1.7 17.5,-1.1 Q18.1,-0.4 19.3,-1.1  M15.2,-5.5 L19.2,-5.7 M26.6,-8.7 L20.6,-0.3 M29.2,-7.9 Q32.8,-8.6 33.7,-7.8 Q34.6,-7.0 32.9,-5.8 Q31.2,-4.7 33.0,-3.8 Q34.8,-2.9 33.8,-1.6 Q32.8,-0.4 29.0,-1.1  M37.8,-0.8 L38.0,-0.4 M39.6,-8.1 L44.6,-8.4 L41.6,-0.4 M48.0,-6.5 L48.3,-0.4 M48.3,-4.6 Q50.8,-6.5 51.7,-5.6 Q52.6,-4.6 52.8,-0.4  M52.8,-4.6 Q55.1,-6.5 56.2,-5.6 Q57.3,-4.6 57.6,-0.4 " fill="none" stroke="#0a0a0a" stroke-width="1.08" stroke-linecap="round" stroke-linejoin="round" transform="translate(68.4,273.6) rotate(-90)"/>
<path d="M70.6,161 L70.8,346.6 M66.2,167.4 L70.6,160.6 L75,167.2 M66.4,340.4 L70.8,347 L75.2,340.2" fill="none" stroke="#0a0a0a" stroke-width="1.1" stroke-linecap="round" stroke-linejoin="round" />
<path d="M192.8,190.4 L193.7,189.6 L193.7,195.0 M195.6,190.7 Q197.6,189.6 198.5,190.1 Q199.4,190.7 198.7,191.6 Q198.0,192.6 196.7,193.8 Q195.4,195.0 199.7,194.8  M203.4,189.6 Q201.5,190.9 201.5,192.3 Q201.5,193.7 202.5,194.3 Q203.4,195.0 204.4,194.3 Q205.3,193.7 205.3,192.3 Q205.3,190.9 203.4,189.6  M211.3,192.0 L211.3,195.0 M211.3,190.4 L211.3,190.7 M213.1,191.9 L213.3,195.0 M213.3,192.8 Q215.0,191.9 215.7,192.4 Q216.4,192.8 216.6,195.0  M221.6,192.2 Q219.9,191.8 219.1,192.6 Q218.3,193.4 219.1,194.2 Q219.9,195.0 221.8,194.5  M223.2,189.6 L223.3,195.0 M223.3,192.8 L225.3,191.9 L226.6,192.8 L226.8,195.0" fill="none" stroke="#9b9b9d" stroke-width="0.75" stroke-linecap="round" stroke-linejoin="round" />
<path d="M127.6,192.8 L188,192.6 M231,192.6 L275.6,192.8 M130,190.8 L127.4,192.8 L130,194.8 M272.8,190.6 L275.8,192.8 L272.8,195" fill="none" stroke="#9b9b9d" stroke-width="0.75" stroke-linecap="round" stroke-linejoin="round" />
<path d="M0.0,-5.0 L3.3,-5.2 L1.3,0.0 M4.7,-4.2 Q6.3,-5.2 7.1,-4.7 Q7.8,-4.2 7.3,-3.2 Q6.7,-2.3 5.6,-1.2 Q4.6,0.0 8.1,-0.2  M12.8,-2.9 L12.8,0.0 M12.8,-4.4 L12.8,-4.2 M14.3,-3.0 L14.5,0.0 M14.5,-2.1 Q15.9,-3.0 16.5,-2.5 Q17.0,-2.1 17.2,0.0  M21.3,-2.7 Q19.9,-3.1 19.3,-2.3 Q18.6,-1.6 19.3,-0.8 Q19.9,0.0 21.5,-0.5  M22.6,-5.2 L22.7,0.0 M22.7,-2.1 L24.4,-3.0 L25.5,-2.1 L25.6,0.0" fill="none" stroke="#9b9b9d" stroke-width="0.75" stroke-linecap="round" stroke-linejoin="round" transform="translate(123.4,264.4) rotate(-90)"/>
<path d="M121,197.6 L121.2,234 M121.2,269 L121.4,305.6 M119,200.6 L121,197.4 L123,200.6 M119.2,302.6 L121.4,305.8 L123.4,302.6" fill="none" stroke="#9b9b9d" stroke-width="0.75" stroke-linecap="round" stroke-linejoin="round" />
<path d="M303.5,152.2 Q302.0,151.6 301.2,152.6 Q300.4,153.6 301.0,154.6 Q301.6,155.6 303.4,154.9  M305.2,149.0 L304.7,155.6 M305.0,153.0 L306.9,151.8 L308.0,153.0 L307.9,155.6 M313.0,152.0 Q311.3,151.5 310.5,152.6 Q309.7,153.6 310.2,154.6 Q310.7,155.6 312.8,153.9  M313.0,151.6 L312.8,155.6 M314.9,152.0 L314.5,155.6 M315.1,150.0 L315.0,150.3 M316.5,151.8 L316.3,155.6 M316.6,153.3 Q317.9,152.0 319.3,152.2 " fill="none" stroke="#a6a6a8" stroke-width="0.8" stroke-linecap="round" stroke-linejoin="round" transform="rotate(-11 300 155.6)"/>
<path d="M297.6,153.4 C294.4,158 293.2,164 293.6,172 M291.4,168.8 L293.6,172.2 L296,169.2" fill="none" stroke="#a6a6a8" stroke-width="0.8" stroke-linecap="round" stroke-linejoin="round" />
<path d="M269.2,313.9 Q267.5,313.0 266.4,314.2 Q265.4,315.3 265.2,316.9 Q265.0,318.5 265.8,319.6 Q266.5,320.8 268.7,319.9  M269.5,320.8 L272.9,313.0 L274.5,320.8 M270.9,317.8 L274.1,317.7 M276.6,313.0 L275.8,320.8 M276.5,313.2 Q279.5,313.4 279.7,314.3 Q279.9,315.2 278.0,316.1 Q276.2,317.1 279.5,320.8  M281.6,313.0 L280.8,320.8 M281.6,313.2 Q284.6,313.4 284.8,314.3 Q284.9,315.2 281.2,317.4  M289.9,313.0 L286.3,313.2 L285.5,320.8 L289.1,320.6 M285.9,316.9 L288.9,316.7 M291.0,313.2 L295.3,313.0 M293.2,313.0 L292.3,320.8" fill="none" stroke="#cacacd" stroke-width="0.95" stroke-linecap="round" stroke-linejoin="round" transform="rotate(-4.5 264 320)"/>
<path d="M263.8,314.2 C260,312.6 256.6,309 254.8,304.6 M255.8,312.2 L254.6,304.4 L263.6,307.2" fill="none" stroke="#cacacd" stroke-width="0.95" stroke-linecap="round" stroke-linejoin="round" />
<path d="M84.4,362.6 L88.8,362.5 M86.6,362.5 L86.7,369.3 M90.3,362.5 L90.3,369.3 M94.3,362.5 L94.3,369.3 M90.3,365.9 L94.3,365.7 M96.0,362.7 L96.0,369.5 M101.4,363.2 Q99.6,362.5 98.8,363.2 Q98.1,364.0 98.8,364.9 Q99.6,365.9 100.5,366.8 Q101.4,367.7 100.7,368.5 Q99.9,369.3 97.7,368.6  M108.2,363.0 L108.3,369.6 M108.2,363.1 Q111.1,363.3 111.4,364.1 Q111.6,364.8 110.0,365.6 Q108.3,366.4 112.0,369.6  M115.4,363.0 Q113.8,364.6 113.7,366.3 Q113.7,367.9 114.5,368.7 Q115.3,369.6 116.2,368.7 Q117.1,367.9 117.1,366.3 Q117.1,364.6 115.4,363.0  M120.8,362.8 Q119.1,364.5 119.1,366.1 Q119.0,367.8 119.9,368.6 Q120.7,369.4 121.6,368.6 Q122.4,367.8 122.4,366.1 Q122.5,364.5 120.8,362.8  M124.1,369.5 L124.5,362.9 L126.5,367.5 L128.6,362.9 L129.0,369.5 M138.2,362.9 L139.3,369.5 L141.1,364.9 L142.5,369.5 L143.9,362.9 M145.5,362.7 L145.5,369.3 M147.1,362.8 L147.1,369.4 L150.5,369.2 M151.9,362.7 L151.9,369.3 L155.2,369.1 M162.0,362.7 L162.1,369.3 M162.0,362.9 Q164.6,363.1 164.9,363.7 Q165.1,364.4 163.7,365.2 Q162.3,366.0 163.9,366.4 Q165.4,366.8 165.3,367.7 Q165.3,368.6 162.1,369.3  M170.2,362.9 L166.9,363.0 L167.1,369.5 L170.3,369.3 M166.9,366.2 L169.7,366.0 M178.6,362.9 Q178.7,367.4 179.5,368.3 Q180.2,369.3 180.9,368.3 Q181.7,367.4 181.8,362.9  M186.1,363.8 Q184.6,363.1 183.9,363.8 Q183.3,364.5 183.9,365.4 Q184.6,366.3 185.3,367.2 Q186.1,368.0 185.5,368.8 Q184.9,369.5 183.0,368.9  M190.4,362.8 L187.3,363.0 L187.5,369.2 L190.5,369.1 M187.3,366.0 L189.9,365.9 M191.6,363.1 L191.8,369.5 M191.6,363.1 Q194.1,363.8 194.6,365.0 Q195.2,366.3 194.6,367.6 Q194.1,368.9 191.8,369.5  M205.2,362.4 L200.8,362.6 L200.8,369.2 M200.8,365.8 L204.3,365.6 M209.2,362.6 Q207.2,364.3 207.1,366.0 Q207.1,367.7 208.1,368.5 Q209.1,369.4 210.2,368.5 Q211.2,367.7 211.3,366.0 Q211.3,364.3 209.2,362.6  M213.2,362.6 L213.4,369.4 M213.2,362.7 Q216.8,362.9 217.1,363.7 Q217.4,364.5 215.4,365.3 Q213.4,366.1 217.8,369.4  M219.9,364.9 L219.9,365.2 M219.9,368.6 L219.9,368.9" fill="none" stroke="#0a0a0a" stroke-width="0.9" stroke-linecap="round" stroke-linejoin="round" />
<path d="M82.6,377.6 L86.0,377.4 M90.8,376.5 L90.9,384.3 M90.8,376.6 Q93.5,376.9 93.7,377.8 Q94.0,378.7 90.9,380.8  M95.3,384.4 L97.5,376.6 L99.7,384.4 M96.2,381.4 L99.1,381.3 M101.0,376.8 L101.1,384.6 M101.0,377.0 Q103.7,377.2 103.9,378.1 Q104.2,379.0 102.7,379.9 Q101.1,380.9 104.5,384.6  M105.8,377.0 L109.6,376.8 M107.7,376.8 L107.8,384.6 M110.9,376.5 L112.5,380.4 L114.1,376.5 M112.5,380.4 L112.5,384.3 M115.9,383.8 L115.5,385.8 M127.4,377.5 Q125.2,376.6 124.2,377.8 Q123.2,378.9 123.2,380.5 Q123.2,382.0 124.2,383.2 Q125.2,384.4 126.4,383.9 Q127.6,383.5 127.6,382.2 Q127.6,380.9 125.6,381.0  M129.3,384.4 L132.1,376.6 L134.9,384.4 M130.5,381.4 L134.1,381.3 M136.5,384.8 L137.0,377.0 L139.4,382.5 L141.8,377.0 L142.3,384.8 M148.5,377.7 Q146.3,376.7 145.3,377.9 Q144.3,379.1 144.3,380.6 Q144.3,382.2 145.3,383.4 Q146.3,384.5 147.5,384.1 Q148.6,383.6 148.6,382.3 Q148.6,381.0 146.7,381.1  M150.6,376.6 L150.6,384.4 M152.5,384.7 L152.6,376.9 L156.5,384.7 L156.6,376.9 M162.8,377.9 Q160.6,377.0 159.6,378.1 Q158.6,379.3 158.6,380.9 Q158.6,382.4 159.6,383.6 Q160.6,384.8 161.8,384.3 Q163.0,383.8 163.0,382.5 Q163.0,381.3 161.0,381.3  M165.0,384.4 L165.2,384.8" fill="none" stroke="#0a0a0a" stroke-width="0.95" stroke-linecap="round" stroke-linejoin="round" />
<path d="M83.0,392.9 L86.8,392.8 M92.0,389.6 L92.2,395.8 M92.0,389.6 Q95.5,390.2 96.3,391.4 Q97.1,392.7 96.3,393.9 Q95.5,395.1 92.2,395.8  M99.1,389.4 L99.1,395.6 M101.2,395.6 L101.3,389.4 L105.6,395.6 L105.7,389.4 M107.5,395.7 L107.7,389.5 L111.9,395.7 L112.1,389.5 M114.1,389.3 L114.1,395.5 M116.1,395.6 L116.3,389.4 L120.5,395.6 L120.7,389.4 M127.6,390.3 Q125.1,389.5 124.0,390.4 Q122.9,391.4 122.9,392.6 Q122.9,393.9 124.0,394.8 Q125.1,395.7 126.4,395.3 Q127.8,395.0 127.8,394.0 Q127.8,392.9 125.6,393.0  M130.0,395.2 L130.1,395.5" fill="none" stroke="#0a0a0a" stroke-width="0.9" stroke-linecap="round" stroke-linejoin="round" />
<path d="M83.0,403.7 L86.8,403.6 M92.0,398.4 L92.2,405.4 M92.0,398.6 Q95.4,398.8 95.8,399.6 Q96.1,400.4 94.1,401.2 Q92.2,402.1 96.5,405.4  M98.2,398.6 Q98.3,403.5 99.3,404.6 Q100.3,405.6 101.3,404.6 Q102.3,403.5 102.4,398.6  M104.1,405.5 L104.2,398.5 L108.2,405.5 L108.3,398.5 M110.0,405.8 L110.1,398.8 L114.1,405.8 L114.2,398.8 M116.1,398.7 L116.1,405.7 M118.0,405.6 L118.2,398.6 L122.1,405.6 L122.3,398.6 M128.7,399.5 Q126.4,398.6 125.3,399.7 Q124.3,400.7 124.3,402.1 Q124.3,403.5 125.3,404.6 Q126.4,405.6 127.6,405.2 Q128.8,404.8 128.8,403.7 Q128.8,402.5 126.8,402.6  M136.2,398.1 L137.2,405.3 L138.7,400.3 L139.9,405.3 L141.1,398.1 M144.1,398.2 Q142.7,400.0 142.6,401.8 Q142.6,403.6 143.3,404.5 Q144.1,405.4 144.8,404.5 Q145.6,403.6 145.6,401.8 Q145.6,400.0 144.1,398.2  M147.0,398.3 L147.1,405.5 M147.0,398.5 Q149.5,398.7 149.8,399.5 Q150.0,400.3 148.6,401.2 Q147.1,402.1 150.3,405.5  M151.5,398.2 L151.5,405.4 M154.5,398.2 L151.5,402.1 L154.6,405.4 M158.8,398.8 Q157.3,398.1 156.7,398.9 Q156.1,399.6 156.7,400.7 Q157.3,401.7 158.1,402.6 Q158.8,403.5 158.2,404.4 Q157.6,405.3 155.8,404.5  M160.0,398.4 L160.0,405.6 M163.3,398.4 L163.3,405.6 M160.0,402.0 L163.3,401.9 M166.3,398.1 Q164.9,399.9 164.8,401.7 Q164.8,403.5 165.5,404.4 Q166.3,405.3 167.0,404.4 Q167.8,403.5 167.8,401.7 Q167.8,399.9 166.3,398.1  M169.2,398.3 L169.3,405.5 M169.2,398.4 Q171.7,398.6 172.0,399.4 Q172.2,400.3 169.3,402.3 " fill="none" stroke="#0a0a0a" stroke-width="0.9" stroke-linecap="round" stroke-linejoin="round" />
<path d="M190.2,378.1 L195.4,378.0 M201.4,375.4 Q201.5,380.3 202.3,381.3 Q203.1,382.4 203.8,381.3 Q204.6,380.3 204.7,375.4  M206.0,375.1 L206.1,382.1 M206.0,375.2 Q208.7,375.4 208.9,376.2 Q209.2,377.0 206.1,379.0  M213.2,375.9 L217.1,375.7 M215.2,375.7 L215.2,382.1 M220.4,375.7 Q218.8,377.3 218.8,378.9 Q218.7,380.5 219.5,381.3 Q220.3,382.1 221.1,381.3 Q221.9,380.5 222.0,378.9 Q222.0,377.3 220.4,375.7  M228.2,381.9 L228.6,375.3 L230.8,379.9 L232.9,375.3 L233.4,381.9 M234.8,382.0 L237.3,375.4 L239.8,382.0 M235.9,379.4 L239.1,379.3 M241.2,375.5 L244.8,382.1 M244.8,375.5 L241.2,382.1 M252.8,375.6 Q251.2,377.2 251.2,378.8 Q251.1,380.4 251.9,381.2 Q252.7,382.0 253.5,381.2 Q254.3,380.4 254.4,378.8 Q254.4,377.2 252.8,375.6  M259.3,375.7 L255.9,375.9 L255.9,382.1 M255.9,378.9 L258.7,378.7" fill="none" stroke="#0a0a0a" stroke-width="0.9" stroke-linecap="round" stroke-linejoin="round" />
<path d="M270.6,376.7 Q268.1,373.8 269.4,372.6 Q270.6,371.4 271.8,372.5 Q272.9,373.6 271.8,375.1 Q270.6,376.7 269.1,378.2 Q267.6,379.8 269.0,381.1 Q270.4,382.4 271.9,381.1 Q273.4,379.8 270.6,376.7 " fill="none" stroke="#0a0a0a" stroke-width="1.3" stroke-linecap="round" stroke-linejoin="round" />
<path d="M278.9,375.7 L278.2,384.0 M278.9,376.8 Q280.6,375.6 281.3,376.4 Q281.9,377.2 281.3,378.7 Q280.7,380.2 278.6,379.8  M283.4,378.2 Q286.2,377.4 285.7,376.5 Q285.2,375.6 284.3,376.5 Q283.5,377.4 283.5,378.8 Q283.6,380.2 286.1,379.9  M289.3,375.7 Q287.8,377.2 287.8,378.5 Q287.7,379.8 288.3,380.2 Q288.9,380.6 289.6,380.0 Q290.4,379.3 290.5,378.1 Q290.5,376.8 289.3,375.7  M292.2,375.7 L291.5,384.0 M292.1,376.8 Q293.9,375.6 294.5,376.4 Q295.2,377.2 294.6,378.7 Q294.0,380.2 291.9,379.8  M297.2,372.2 L296.3,380.6 M298.3,378.2 Q301.2,377.4 300.7,376.5 Q300.2,375.6 299.3,376.5 Q298.4,377.4 298.5,378.8 Q298.6,380.2 301.1,379.9 " fill="none" stroke="#0a0a0a" stroke-width="0.95" stroke-linecap="round" stroke-linejoin="round" transform="rotate(-4 278 380)"/>
<path d="M303.1,378.8 L303.2,379.0" fill="none" stroke="#0a0a0a" stroke-width="1.0" stroke-linecap="round" stroke-linejoin="round" />
<path d="M306.8,374.6 L306.8,378.8 M306.8,372.3 L306.8,372.7 M310.3,374.4 L310.5,378.8 M310.5,375.8 Q312.1,374.4 312.8,375.1 Q313.4,375.8 313.6,378.8 " fill="none" stroke="#0a0a0a" stroke-width="0.95" stroke-linecap="round" stroke-linejoin="round" />
<path d="M201.0,384.8 Q200.6,391.2 201.1,391.8 Q201.6,392.4 202.5,391.8  M199.4,387.8 L202.5,387.6 M204.5,384.4 L204.0,392.4 M204.3,389.2 L206.4,387.8 L207.5,389.2 L207.5,392.4 M209.7,390.2 Q212.9,389.4 212.3,388.5 Q211.7,387.6 210.7,388.5 Q209.8,389.4 209.9,390.7 Q210.1,392.0 212.9,391.8 " fill="none" stroke="#0a0a0a" stroke-width="0.95" stroke-linecap="round" stroke-linejoin="round" />
<path d="M219.0,387.2 L219.2,392.2 M219.2,389.2 Q220.6,387.5 222.2,387.7  M225.8,387.2 Q224.2,388.8 224.3,390.0 Q224.4,391.3 225.1,391.8 Q225.8,392.2 226.7,391.6 Q227.5,390.9 227.4,389.6 Q227.4,388.3 225.8,387.2  M231.4,387.2 Q229.8,388.8 229.8,390.0 Q229.9,391.3 230.6,391.8 Q231.4,392.2 232.2,391.6 Q233.0,390.9 233.0,389.6 Q232.9,388.3 231.4,387.2  M235.0,387.2 L235.2,392.2 M235.2,388.8 Q236.6,387.2 237.1,388.0 Q237.7,388.8 237.8,392.2  M237.8,388.8 Q239.1,387.2 239.7,388.0 Q240.3,388.8 240.5,392.2  M242.6,391.8 L242.7,392.2" fill="none" stroke="#0a0a0a" stroke-width="0.95" stroke-linecap="round" stroke-linejoin="round" />
<path d="M422.3,64.6 Q419.4,63.6 417.8,64.7 Q416.2,65.8 417.0,67.2 Q417.9,68.6 419.1,69.9 Q420.3,71.2 418.7,72.4 Q417.0,73.6 413.5,72.6 " fill="none" stroke="#0a0a0a" stroke-width="2.2" stroke-linecap="round" stroke-linejoin="round" />
<path d="M424.7,65.5 L422.4,73.3 M430.2,65.5 L427.8,73.3 M423.6,69.4 L429.0,69.3 M435.1,65.6 Q432.1,67.5 431.5,69.5 Q430.9,71.4 431.8,72.4 Q432.6,73.4 434.2,72.4 Q435.7,71.4 436.3,69.5 Q437.0,67.5 435.1,65.6  M439.8,65.5 L437.7,73.3 M439.8,65.6 Q443.8,65.9 443.9,66.8 Q444.1,67.7 438.7,69.8  M446.7,65.5 L444.6,73.3 M446.6,65.6 Q450.7,65.9 450.8,66.7 Q451.0,67.6 445.6,69.8  M453.9,65.4 L451.5,73.2 M453.8,73.5 L456.3,65.7 L458.7,73.5 L461.3,65.7 M468.7,66.3 Q466.2,65.4 464.6,66.6 Q463.0,67.8 462.6,69.3 Q462.1,70.9 463.0,72.0 Q463.8,73.2 465.5,72.7 Q467.1,72.3 467.5,71.0 Q467.9,69.7 465.4,69.8 " fill="none" stroke="#0a0a0a" stroke-width="2.05" stroke-linecap="round" stroke-linejoin="round" />
<path d="M482.6,65.2 Q479.6,67.2 479.0,69.3 Q478.3,71.4 479.1,72.4 Q480.0,73.4 481.5,72.4 Q483.0,71.4 483.7,69.3 Q484.4,67.2 482.6,65.2 " fill="none" stroke="#0a0a0a" stroke-width="2.05" stroke-linecap="round" stroke-linejoin="round" />
<path d="M487.7,66.0 L485.6,73.6 M487.6,66.1 Q491.2,66.4 491.2,67.2 Q491.3,68.1 486.6,70.2  M493.8,65.8 L499.0,65.7 M496.4,65.7 L494.2,73.3 M501.1,65.6 L498.8,73.2 M505.8,65.6 Q503.2,67.5 502.6,69.4 Q502.0,71.3 502.7,72.2 Q503.4,73.2 504.8,72.2 Q506.1,71.3 506.8,69.4 Q507.4,67.5 505.8,65.6  M507.8,73.5 L510.2,65.9 L512.1,73.5 L514.5,65.9 M520.5,66.6 Q518.5,65.8 517.4,66.7 Q516.3,67.5 516.9,68.6 Q517.4,69.6 518.2,70.6 Q518.9,71.6 517.8,72.5 Q516.7,73.4 514.4,72.7 " fill="none" stroke="#0a0a0a" stroke-width="2.05" stroke-linecap="round" stroke-linejoin="round" />
<path d="M411.4,76 C450,76.8 490,76 522.6,76.6" fill="none" stroke="#0a0a0a" stroke-width="1.25" stroke-linecap="round" stroke-linejoin="round" />
<circle cx="403.4" cy="65.2" r="5.8" fill="#f7f25e"/>
<path d="M400.6,66.6 L400.4,63.6 L402,65.4 L403.4,63 L404.8,65.4 L406.4,63.6 L406.2,66.6 Z" fill="none" stroke="#0a0a0a" stroke-width="0.7" stroke-linecap="round" stroke-linejoin="round" style="fill:#0a0a0a"/>
<path d="M401.8,72.4 H405 M402,74 H404.8 M402.6,75.4 H404.2" fill="none" stroke="#7a7a7c" stroke-width="0.7" stroke-linecap="round" stroke-linejoin="round" />
<path d="M376.8,60.6 L376.7,81 M376.6,104.4 L376.6,188.8 M376.6,207 L376.4,287.4 M376.4,305.6 L376.2,385.8" fill="none" stroke="#0a0a0a" stroke-width="1.1" stroke-linecap="round" stroke-linejoin="round" />
<ellipse cx="376.8" cy="93.6" rx="8.3" ry="6.8" fill="none" stroke="#0a0a0a" stroke-width="1.2" transform="rotate(-12 376.8 93.6)"/>
<path d="M373.9,97.6 L378.9,90.4 L379.5,97.8 M375.4,95.4 L379.4,95.2" fill="none" stroke="#0a0a0a" stroke-width="1.25" stroke-linecap="round" stroke-linejoin="round" />
<ellipse cx="375.4" cy="196.6" rx="7.3" ry="6.8" fill="none" stroke="#0a0a0a" stroke-width="1.3"/>
<path d="M373.6,193.6 L372.6,200.4 M373.4,193.8 C377,192.4 378.6,194.6 376,196.6 C374.6,197.4 373.4,197.2 373.2,197" fill="none" stroke="#0a0a0a" stroke-width="1.25" stroke-linecap="round" stroke-linejoin="round" />
<path d="M378.7,196.2 A4.5,4.5 0 1 1 376.2,204.4 L377.6,207.4 L380.6,204.9 A4.5,4.5 0 0 0 378.7,196.2Z" fill="#9d9da0"/><circle cx="378.7" cy="200.7" r="4.5" fill="#9d9da0"/><circle cx="378.7" cy="200.5" r="1.6" fill="#bcbcc0"/>
<ellipse cx="374.6" cy="296.1" rx="6.2" ry="5.5" fill="none" stroke="#0a0a0a" stroke-width="1.4" transform="rotate(-15 374.6 296.1)"/>
<path d="M376.6,295 C375.4,293.6 372.6,294.4 372.4,296.6 C372.2,298.6 374.6,299.4 376.6,298" fill="none" stroke="#0a0a0a" stroke-width="1.3" stroke-linecap="round" stroke-linejoin="round" />
<!--/TXT--></g>
</g>

<!-- top bar -->
<g id="topbar">
  <rect x="0" y="0" width="600" height="33.9" fill="#4a5681"/>
  <!-- status -->
  <text transform="translate(8,7.9) scale(0.3)" font-size="20" fill="#fff" opacity="0.95" textLength="53.3" lengthAdjust="spacingAndGlyphs" stroke="#fff" stroke-width="0.9">15:39</text>
  <text transform="translate(30,7.9) scale(0.3)" font-size="20" fill="#fff" opacity="0.95" textLength="110" lengthAdjust="spacingAndGlyphs" stroke="#fff" stroke-width="0.5">Thu 25 Nov</text>
  <circle cx="296.3" cy="6.3" r="0.8" fill="#c9cde0"/><circle cx="300" cy="6.3" r="0.8" fill="#c9cde0"/><circle cx="303.7" cy="6.3" r="0.8" fill="#c9cde0"/>
  <!-- wifi -->
  <path d="M548.3,4.6 Q551.3,2.2 554.3,4.6" class="ui" stroke-width="1"/>
  <path d="M549.6,6.1 Q551.3,4.7 553,6.1" class="ui" stroke-width="1"/>
  <circle cx="551.3" cy="7.6" r="0.7" fill="#fff"/>
  <!-- moon -->
  <path d="M560.6,3.6 A2.6,2.6 0 1 0 562.9,7.4 A2.3,2.3 0 0 1 560.6,3.6Z" fill="#fff"/>
  <text transform="translate(564.6,8) scale(0.3)" font-size="20" fill="#fff" textLength="44.6" lengthAdjust="spacingAndGlyphs" stroke="#fff" stroke-width="0.5">78%</text>
  <rect x="580.2" y="3.7" width="10.6" height="4.8" rx="1.4" fill="none" stroke="#aeb4cc" stroke-width="0.6"/>
  <rect x="581" y="4.5" width="7" height="3.2" rx="0.8" fill="#fff"/>
  <rect x="591.4" y="5.2" width="0.8" height="1.8" rx="0.4" fill="#aeb4cc"/>
  <!-- back -->
  <path d="M12.2,19.6 L8.6,23.4 L12.2,27.2" class="ui" stroke-width="1.2"/>
  <!-- grid -->
  <g class="ui" stroke-width="0.9"><rect x="28.8" y="18.8" width="3.5" height="3.9" rx="1"/><rect x="34" y="18.8" width="3.5" height="3.9" rx="1"/><rect x="28.8" y="24" width="3.5" height="3.9" rx="1"/><rect x="34" y="24" width="3.5" height="3.9" rx="1"/></g>
  <!-- search -->
  <circle cx="54.3" cy="22.7" r="3.2" class="ui" stroke-width="1"/><path d="M56.7,25.1 L59.6,28" class="ui" stroke-width="1.1"/>
  <!-- bookmark -->
  <path d="M73.6,18.4 H80.6 V28.4 L77.1,25.6 L73.6,28.4 Z" class="ui" stroke-width="1"/>
  <!-- share -->
  <path d="M97.6,21.6 H95.4 V28.6 H103.6 V21.6 H101.4" class="ui" stroke-width="1"/><path d="M99.5,25.2 V17.6 M97.3,19.6 L99.5,17.4 L101.7,19.6" class="ui" stroke-width="1"/>
  <!-- title -->
  <text x="299.6" y="26.4" font-size="9.1" font-weight="bold" fill="#fff" text-anchor="middle" textLength="126" lengthAdjust="spacingAndGlyphs">Comments On Furniture Ideas 2</text>
  <path d="M367.2,22.8 L369,24.6 L370.8,22.8" class="ui" stroke-width="0.8"/>
  <!-- undo (dim) -->
  <path d="M499.2,19.2 L496.6,21.8 L499.2,24.4 M496.8,21.8 H502.6 A3,3 0 0 1 502.6,27.8 H500.6" class="ui" style="stroke:#8d96b6;stroke-width:1"/>
  <!-- redo -->
  <path d="M525,19.2 L527.6,21.8 L525,24.4 M527.4,21.8 H521.6 A3,3 0 0 0 521.6,27.8 H523.6" class="ui" stroke-width="1.1"/>
  <!-- add page -->
  <path d="M540.6,19.4 A1.4,1.4 0 0 1 542,18 H546.6 L549.6,21 V27.4 A1.4,1.4 0 0 1 548.2,28.8 H542 A1.4,1.4 0 0 1 540.6,27.4 Z M546.4,18.2 V21.2 H549.4" class="ui" stroke-width="0.9"/>
  <path d="M545.1,22 V26.4 M542.9,24.2 H547.3" class="ui" stroke-width="0.9"/>
  <!-- close -->
  <path d="M563.6,20 L570.4,26.8 M570.4,20 L563.6,26.8" class="ui" stroke-width="1"/>
  <!-- more -->
  <circle cx="585" cy="23.3" r="0.95" fill="#fff"/><circle cx="589" cy="23.3" r="0.95" fill="#fff"/><circle cx="593" cy="23.3" r="0.95" fill="#fff"/>
</g>

<!-- toolbar -->
<g id="toolbar">
  <rect x="0" y="33.6" width="600" height="24.6" fill="#f8f8f9"/>
  <rect x="0" y="58" width="600" height="0.7" fill="#dedee2"/>
  <!-- page layout icon -->
  <rect x="81.6" y="42.8" width="8.2" height="8" rx="0.8" class="tb"/>
  <rect x="79.6" y="45.4" width="4.2" height="4" rx="0.5" fill="#f8f8f9" stroke="#4a4a4c" stroke-width="0.7"/>
  <path d="M85,49 H88" class="tb" style="stroke-width:0.6"/>
  <rect x="95.4" y="37.6" width="0.5" height="17.6" fill="#dcdce0"/>
  <!-- bluetooth -->
  <path d="M102,39.2 L104.4,41.6 L103.2,42.9 V37.6 L104.4,38.9 L102,41.3" fill="none" stroke="#2a8be8" stroke-width="0.6" stroke-linejoin="round" stroke-linecap="round"/>
  <!-- pen (selected) -->
  <path d="M106.3,52.2 L107.6,48.4 C109.5,46.6 114.6,41.6 116.4,40.3 C117.8,39.4 119.9,40.6 119.3,42.2 C118.2,44.2 112.3,49.8 110.3,51.2 Z" fill="#0b0b0b"/>
  <path d="M106.2,53.4 H114" stroke="#0b0b0b" stroke-width="0.9" stroke-linecap="round"/><path d="M113.4,43.6 L115.6,46" stroke="#f8f8f9" stroke-width="0.5"/>
  <!-- eraser -->
  <g transform="translate(140.4,46.4) rotate(-42)"><rect x="-7" y="-4.1" width="14" height="8.2" rx="1.6" class="tb"/><path d="M-3.2,-4.1 V4.1" class="tb"/></g>
  <!-- highlighter -->
  <g transform="translate(168.4,46.2) rotate(-45)"><path d="M-2.4,-2.7 H7.4 A1,1 0 0 1 8.4,-1.7 V1.7 A1,1 0 0 1 7.4,2.7 H-2.4 Z M-2.4,-2.2 L-5.6,-1.5 V1.5 L-2.4,2.2 M-5.6,-1.3 L-8.6,1.3 L-5.6,1.3" class="tb"/></g>
  <!-- shapes -->
  <rect x="192.6" y="40.8" width="6.6" height="6.6" rx="0.7" class="tb"/>
  <circle cx="192.1" cy="49.2" r="3.3" fill="#f8f8f9" stroke="#4a4a4c" stroke-width="0.8"/>
  <path d="M201.6,46.4 V52.6 L196.4,49.5 Z" fill="#f8f8f9" stroke="#4a4a4c" stroke-width="0.8" stroke-linejoin="round"/>
  <!-- lasso -->
  <ellipse cx="223.4" cy="45.6" rx="5.6" ry="4.9" class="tb" style="stroke-linecap:butt;stroke-width:0.9" stroke-dasharray="1.25 1.05"/>
  <path d="M220.4,49.8 C219.4,50.8 221.4,51.6 222.4,53" class="tb" style="stroke-linecap:butt;stroke-width:0.9" stroke-dasharray="1.2 0.9"/>
  <!-- sticker -->
  <path d="M247.6,41.6 H253 A4.8,4.8 0 0 1 257.6,47.6 L255,51.2 H247.6 A4.8,4.8 0 0 1 247.6,41.6 Z" class="tb"/>
  <path d="M257.4,48.4 C256,48.6 255,49.6 255,51" class="tb"/>
  <path d="M250.4,43.9 L251.3,45.7 L253.3,46 L251.8,47.4 L252.2,49.4 L250.4,48.4 L248.6,49.4 L249,47.4 L247.5,46 L249.5,45.7 Z" class="tb" style="stroke-width:0.7"/>
  <!-- image -->
  <rect x="272.2" y="42.2" width="12.6" height="9.6" rx="1.3" class="tb"/>
  <circle cx="275.4" cy="45" r="0.9" class="tb" style="stroke-width:0.6"/>
  <path d="M273.6,50 L277.4,47.4 L279.6,48.8 L283.6,46" class="tb" style="stroke-width:0.7"/>
  <!-- text -->
  <rect x="300.6" y="42.6" width="11.2" height="8.2" rx="1" class="tb"/>
  <circle cx="300.6" cy="46.7" r="0.8" fill="#f8f8f9" stroke="#4a4a4c" stroke-width="0.5"/><circle cx="311.8" cy="46.7" r="0.8" fill="#f8f8f9" stroke="#4a4a4c" stroke-width="0.5"/>
  <path d="M304.2,45 H308.2 M306.2,45 V48.8" class="tb" style="stroke-width:1"/>
  <!-- laser -->
  <g transform="translate(332.6,48) rotate(-42)"><rect x="-6" y="-2.2" width="11.4" height="4.4" rx="1.2" class="tb"/><rect x="-3.6" y="-0.6" width="3.4" height="1.2" rx="0.5" class="tb" style="stroke-width:0.5"/></g>
  <path d="M338.6,42.4 L338.6,42.41 M338.6,40 V38.6 M340.6,40.6 L341.6,39.6 M341.2,42.6 H342.6 M336.6,40.6 L335.8,39.8 M340.6,44.2 L341.4,45" class="tb" style="stroke-width:0.6"/>
  <rect x="351" y="37.6" width="0.5" height="17.6" fill="#dcdce0"/>
  <!-- colours -->
  <circle cx="360.8" cy="46.3" r="5.2" fill="#26c6f2"/>
  <circle cx="383.3" cy="46.3" r="5.2" fill="#fff" stroke="#ececef" stroke-width="0.6"/>
  <circle cx="406.3" cy="46.3" r="6.7" fill="#f8f8f9" stroke="#c4c4c8" stroke-width="1.1"/>
  <circle cx="406.3" cy="46.3" r="4.9" fill="#0a0a0a"/>
  <path d="M405.1,45.9 L406.3,47.1 L407.5,45.9 Z" fill="#fff"/>
  <!-- strokes -->
  <path d="M424.8,46.4 H433" stroke="#3a3a3c" stroke-width="0.6" stroke-linecap="round"/>
  <path d="M446.6,46.4 H455.6" stroke="#1c1c1e" stroke-width="1.5" stroke-linecap="round"/>
  <rect x="465.4" y="37" width="18" height="18.6" rx="2.2" fill="#e1e1e4"/>
  <path d="M471.8,46.4 H477.2" stroke="#222224" stroke-width="3.3" stroke-linecap="round"/>
</g>

<!-- home indicator -->
<rect x="222" y="411.6" width="156" height="2.6" rx="1.3" fill="#0d0d0d"/>
</svg>
</body>
</html>
